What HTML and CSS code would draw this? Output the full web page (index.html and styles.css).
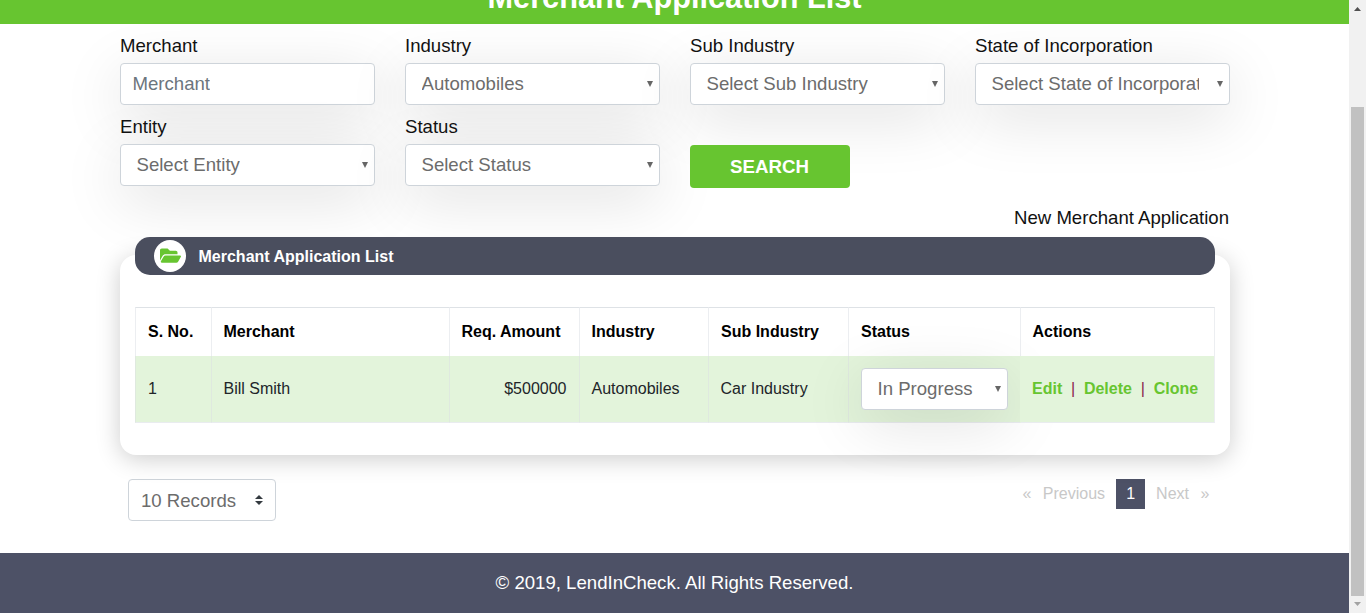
FILE: index.html
```html
<!DOCTYPE html>
<html lang="en">
<head>
<meta charset="utf-8">
<title>Merchant Application List</title>
<link rel="stylesheet" href="styles.css">
</head>
<body>
<div class="page">
  <header class="banner"><h1>Merchant Application List</h1></header>
  <main class="container">
    <form class="filters">
      <div class="field"><label>Merchant</label><div class="control control-text"><span>Merchant</span></div></div>
      <div class="field"><label>Industry</label><div class="control"><span>Automobiles</span><svg class="arrow" viewBox="0 0 6 6"><path d="M0 0h6L3 6z"/></svg></div></div>
      <div class="field"><label>Sub Industry</label><div class="control"><span>Select Sub Industry</span><svg class="arrow" viewBox="0 0 6 6"><path d="M0 0h6L3 6z"/></svg></div></div>
      <div class="field"><label>State of Incorporation</label><div class="control"><span>Select State of Incorporation</span><svg class="arrow" viewBox="0 0 6 6"><path d="M0 0h6L3 6z"/></svg></div></div>
      <div class="field"><label>Entity</label><div class="control"><span>Select Entity</span><svg class="arrow" viewBox="0 0 6 6"><path d="M0 0h6L3 6z"/></svg></div></div>
      <div class="field"><label>Status</label><div class="control"><span>Select Status</span><svg class="arrow" viewBox="0 0 6 6"><path d="M0 0h6L3 6z"/></svg></div></div>
      <button type="button" class="search">SEARCH</button>
    </form>
    <a class="new-link">New Merchant Application</a>
    <section class="card">
      <div class="card-title">
        <span class="badge"><svg viewBox="0 0 576 512" preserveAspectRatio="none"><path d="M572.694 292.093L500.27 416.248A63.997 63.997 0 0 1 444.989 448H45.025c-18.523 0-30.064-20.093-20.731-36.093l72.424-124.155A64 64 0 0 1 152 256h399.964c18.523 0 30.064 20.093 20.73 36.093zM152 224h328v-48c0-26.51-21.49-48-48-48H272l-64-64H48C21.49 64 0 85.49 0 112v278.046l69.077-118.418C86.214 242.25 117.989 224 152 224z"/></svg></span>
        <h2>Merchant Application List</h2>
      </div>
      <table>
        <colgroup><col class="c-no"><col class="c-merchant"><col class="c-amount"><col class="c-industry"><col class="c-sub"><col class="c-status"><col class="c-actions"></colgroup>
        <thead><tr><th>S. No.</th><th>Merchant</th><th>Req. Amount</th><th>Industry</th><th>Sub Industry</th><th>Status</th><th>Actions</th></tr></thead>
        <tbody><tr>
          <td>1</td><td>Bill Smith</td><td class="amount">$500000</td><td>Automobiles</td><td>Car Industry</td>
          <td class="status"><div class="control"><span>In Progress</span><svg class="arrow" viewBox="0 0 6 6"><path d="M0 0h6L3 6z"/></svg></div></td>
          <td class="actions"><div><a>Edit</a><i>|</i><a>Delete</a><i>|</i><a>Clone</a></div></td>
        </tr></tbody>
      </table>
    </section>
    <div class="list-footer">
      <div class="records"><span>10 Records</span><svg viewBox="0 0 4 5"><path d="M2 0L0 2h4zm0 5L0 3h4z"/></svg></div>
      <nav class="pager"><span class="mark">«</span><span class="prev">Previous</span><b>1</b><span class="next">Next</span><span class="mark">»</span></nav>
    </div>
  </main>
  <footer>© 2019, LendInCheck. All Rights Reserved.</footer>
</div>
<div class="scrollbar">
  <svg viewBox="0 0 7 4"><path d="M0 4h7L3.5 0z"/></svg>
  <div class="thumb"></div>
  <svg class="down" viewBox="0 0 7 4"><path d="M0 0h7L3.5 4z"/></svg>
</div>
</body>
</html>
```
FILE: styles.css
```css
* { box-sizing: border-box; }
body {
  margin: 0;
  height: 613px;
  display: flex;
  overflow: hidden;
  background: #fff;
  color: #212529;
  font: 18.6px/24px "Liberation Sans", Arial, sans-serif;
}
h1, h2 { margin: 0; }
.page { width: 1349px; height: 613px; display: flex; flex-direction: column; }
.banner {
  height: 24px;
  flex: none;
  background: #67c530;
  color: #fff;
  display: flex;
  justify-content: center;
  align-items: flex-end;
  overflow: hidden;
}
.banner h1 { font-size: 30.7px; line-height: 36px; margin-bottom: 8px; }
.container { width: 1110px; margin-left: 120px; height: 529px; flex: none; }
.filters {
  display: grid;
  grid-template-columns: repeat(4, 255px);
  column-gap: 30px;
  grid-auto-rows: 81px;
  padding-top: 9px;
}
.field label { display: block; height: 30px; line-height: 25px; color: #111; }
.control {
  height: 42px;
  border: 1px solid #ced4da;
  border-radius: 4px;
  background: #fff;
  box-shadow: 0 13px 61px rgba(0, 0, 0, .13);
  color: #6c6c6c;
  display: flex;
  align-items: center;
  justify-content: space-between;
  padding: 0 6px 0 15.5px;
}
.control span { overflow: hidden; white-space: nowrap; max-width: 207px; line-height: 26px; }
.control-text { padding-left: 11.5px; color: #6c757d; }
.arrow { width: 6px; height: 6px; fill: #666; flex: none; }
.search {
  width: 160px;
  height: 43px;
  margin-top: 31px;
  padding: 0 1px 0 0;
  border: 0;
  border-radius: 4px;
  background: #67c530;
  color: #fff;
  font: bold 18.7px/43px "Liberation Sans", Arial, sans-serif;
}
.new-link { display: block; height: 42px; padding: 11px 1px 0 0; text-align: right; color: #111; }
.card {
  position: relative;
  margin-top: 18px;
  height: 200px;
  border-radius: 16px;
  background: #fff;
  box-shadow: 0 4px 24px rgba(0, 0, 0, .2);
  padding: 0 15px;
  margin-bottom: 24px;
}
.card-title {
  height: 38px;
  margin-bottom: 32px;
  transform: translateY(-18px);
  border-radius: 15px;
  background: #4a4e5e;
  color: #fff;
  display: flex;
  align-items: center;
  padding-left: 19px;
  gap: 12px;
}
.card-title h2 { font-size: 16px; line-height: 20px; padding: 2px 0 0 .5px; }
.badge {
  width: 32px;
  height: 32px;
  border-radius: 50%;
  background: #fff;
  display: flex;
  align-items: center;
  justify-content: center;
}
.badge svg { width: 21px; height: 19px; fill: #67c530; margin-bottom: 2px; }
table {
  width: 1080px;
  margin-top: -18px;
  table-layout: fixed;
  border-collapse: separate;
  border-spacing: 0;
  font-size: 16px;
  line-height: 20px;
}
.c-no { width: 76px; }
.c-merchant { width: 238px; }
.c-amount { width: 130px; }
.c-industry { width: 129px; }
.c-sub { width: 140px; }
.c-status { width: 172px; }
.c-actions { width: 195px; }
th, td { padding: 0 12px 0 11.5px; border-left: 1px solid #eceef1; text-align: left; white-space: nowrap; }
th:first-child, td:first-child { padding-left: 12px; }
th:last-child, td:last-child { border-right: 1px solid #eceef1; }
th { height: 49px; border-top: 1px solid #dee2e6; color: #000; }
td { height: 67px; border-bottom: 1px solid #e9ecef; border-left-color: #dfe9df; background: #e3f4db; }
td .control { width: 147px; font-size: 18.6px; }
th:nth-child(5), th:nth-child(6), .status { padding-left: 12px; }
.amount { text-align: right; padding-right: 12.5px; }
.actions { border-left-color: #e3f4db; padding: 0 0 0 11px; }
.actions div { display: flex; color: #8b1e4c; font-weight: bold; }
.actions a { color: #67c530; }
.actions i { font-style: normal; font-weight: normal; width: 21.7px; text-align: center; }
.list-footer { display: flex; justify-content: space-between; padding: 0 20px 0 8px; }
.records {
  width: 148px;
  height: 42px;
  border: 1px solid #ced4da;
  border-radius: 4px;
  color: #6c6c6c;
  background: #fff;
  display: flex;
  align-items: center;
  justify-content: space-between;
  padding: 1px 12px 0;
}
.records svg { width: 8px; height: 10px; fill: #343a40; margin-bottom: 1px; }
.pager { display: flex; height: 30px; font-size: 16px; line-height: 30px; color: #c8c8c8; }
.pager b { width: 29px; background: #4d5166; color: #fff; font-weight: normal; text-align: center; }
.mark { width: 10px; text-align: center; }
.prev { padding: 0 11px; }
.next { padding: 0 11px; }
footer {
  height: 60px;
  flex: none;
  background: #4d5166;
  color: #fff;
  text-align: center;
  line-height: 59px;
}
.scrollbar {
  width: 17px;
  height: 613px;
  background: #f1f1f1;
  display: flex;
  flex-direction: column;
  align-items: center;
  padding: 7px 0;
}
.scrollbar svg { width: 7px; height: 4px; fill: #505050; flex: none; }
.thumb { width: 13px; height: 489px; margin-top: 96px; background: #c1c1c1; flex: none; }
.scrollbar .down { margin-top: 6px; fill: #a3a3a3; }
```
